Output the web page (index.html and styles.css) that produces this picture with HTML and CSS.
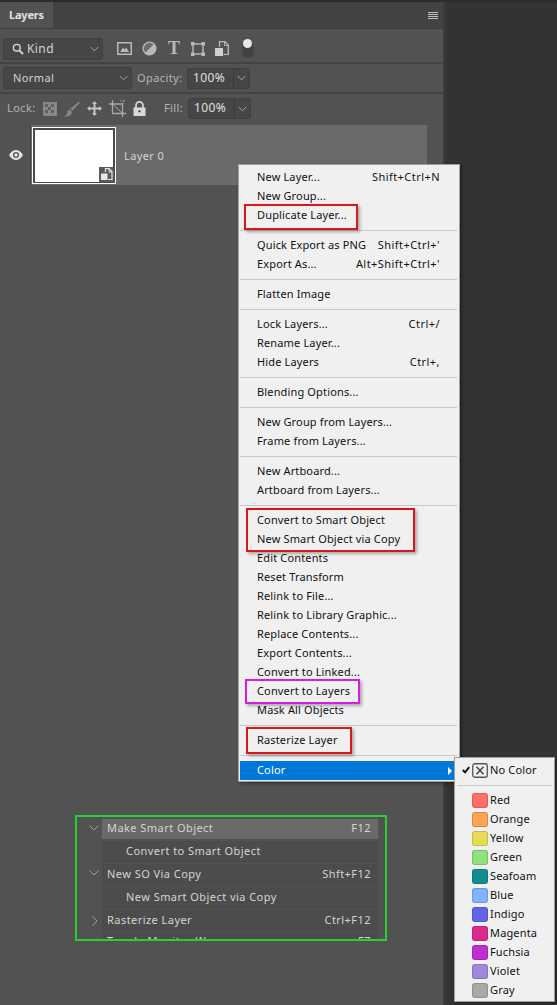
FILE: index.html
```html
<!DOCTYPE html>
<html lang="en">
<head>
    <meta charset="UTF-8">
    <meta name="viewport" content="width=device-width, initial-scale=1.0">
    <title>Layers panel menu</title>
    <link rel="stylesheet" href="styles.css">
</head>
<body>

    <div class="panel">
        <!-- Tab bar -->
        <div class="tabbar">
            <div class="tab">Layers</div>
            <div class="burger"><i></i><i></i><i></i><i></i></div>
        </div>

        <!-- Filter row -->
        <div class="row row-filter">
            <div class="select select-kind">
                <svg class="search" width="12" height="12" viewBox="0 0 12 12"><circle cx="4.8" cy="4.8" r="3.4" fill="none" stroke="#d8d8d8" stroke-width="1.4"/><path d="M7.3 7.3 11 11" stroke="#d8d8d8" stroke-width="1.8"/></svg>
                <span>Kind</span>
                <svg class="chev" width="9" height="6" viewBox="0 0 9 6"><path d="M.7.9 4.5 4.8 8.3.9" fill="none" stroke="#a8a8a8"/></svg>
            </div>
            <div class="filters">
                <svg width="15" height="13" viewBox="0 0 15 13"><rect x=".75" y=".75" width="13.5" height="11.5" fill="none" stroke="#b9b9b9" stroke-width="1.5"/><path d="M3 10 6 5.5 7.7 7.6 9.3 5.5 12 10Z" fill="#b9b9b9"/></svg>
                <svg width="15" height="15" viewBox="0 0 15 15"><circle cx="7.5" cy="7.5" r="7" fill="#b9b9b9"/><path d="M11.6 3.4A5.8 5.8 0 0 0 3.4 11.6Z" fill="#6d6d6d"/></svg>
                <span class="type-t">T</span>
                <svg width="14" height="14" viewBox="0 0 14 14"><rect x="2" y="2" width="10" height="10" fill="none" stroke="#b9b9b9" stroke-width="1.4"/><path d="M0 0h3.5v3.5H0zM10.500 0H14v3.500h-3.500zM0 10.500h3.500V14H0zM10.500 10.500H14V14h-3.500z" fill="#b9b9b9"/></svg>
                <svg width="14" height="15" viewBox="0 0 14 15"><path d="M4.500 6V.7h5.500l3.300 3.300v9.300H8.500" fill="none" stroke="#b9b9b9" stroke-width="1.300"/><path d="M9.500.7v3.800h3.800" fill="none" stroke="#b9b9b9"/><rect x="0" y="7" width="8" height="8" fill="#d0d0d0"/></svg>
                <div class="toggle"><b></b></div>
            </div>
        </div>

        <!-- Blend mode row -->
        <div class="row row-blend">
            <div class="select select-blend">
                <span>Normal</span>
                <svg class="chev" width="9" height="6" viewBox="0 0 9 6"><path d="M.7.9 4.5 4.800 8.300.9" fill="none" stroke="#a8a8a8"/></svg>
            </div>
            <span class="label label-opacity">Opacity:</span>
            <div class="percent">
                <span>100%</span>
                <em><svg width="9" height="6" viewBox="0 0 9 6"><path d="M.7.9 4.500 4.800 8.300.9" fill="none" stroke="#a8a8a8"/></svg></em>
            </div>
        </div>

        <!-- Lock row -->
        <div class="row row-lock">
            <span class="label label-lock">Lock:</span>
            <div class="locks">
                <svg width="14" height="14" viewBox="0 0 14 14"><rect x=".5" y=".5" width="13" height="13" fill="#8a8a8a" stroke="#858585"/><path d="M2 2h3v3H2zM8 2h3v3H8zM5 5h3v3H5zM2 8h3v3H2zM8 8h3v3H8z" fill="#5f5f5f"/></svg>
                <svg width="16" height="16" viewBox="0 0 16 16"><path d="M15 .5 16 1.500 8.500 9.800 6.300 7.800Z" fill="#858585"/><path d="M5.500 8.500C3 9 3.500 12 2.500 13.500 2 14.300 1 14.800.3 15.200 3.500 16.200 7.500 15 8 11Z" fill="#858585"/></svg>
                <svg width="15" height="15" viewBox="0 0 15 15"><path d="M7.500 0 10 3H8.500V6.500H12V5l3 2.500L12 10V8.500H8.500V12H10l-2.500 3L5 12h1.500V8.500H3V10L0 7.500 3 5v1.500h3.500V3H5Z" fill="#c4c4c4"/></svg>
                <svg width="17" height="17" viewBox="0 0 17 17"><path d="M3.500 0v13.500H17M0 4h13.500v13" fill="none" stroke="#a8a8a8" stroke-width="1.300"/><path d="M11 1l5 0M14.500 0v4" stroke="#a8a8a8" stroke-dasharray="2 1" fill="none" opacity=".7"/><path d="M3.500 4 13.500 13.500" stroke="#a8a8a8" stroke-width="1"/></svg>
                <svg width="13" height="15" viewBox="0 0 13 15"><path d="M3 7V4.300a3.500 3.500 0 0 1 7 0V7" fill="none" stroke="#d8d8d8" stroke-width="1.700"/><path d="M.5 6.500h12V15H.5ZM6.500 9a1.300 1.300 0 0 0 0 2.600 1.300 1.300 0 0 0 0-2.600Z" fill="#d8d8d8" fill-rule="evenodd"/></svg>
            </div>
            <span class="label label-fill">Fill:</span>
            <div class="percent">
                <span>100%</span>
                <em><svg width="9" height="6" viewBox="0 0 9 6"><path d="M.7.9 4.500 4.800 8.300.9" fill="none" stroke="#a8a8a8"/></svg></em>
            </div>
        </div>

        <!-- Layer row -->
        <div class="layer">
            <div class="eye">
                <svg width="14" height="10" viewBox="0 0 14 10"><path d="M0 5C2 1.500 4.500 0 7 0s5 1.500 7 5c-2 3.500-4.500 5-7 5S2 8.500 0 5Z" fill="#e4e4e4"/><circle cx="7" cy="5" r="3" fill="#535353"/><circle cx="7" cy="5" r="1.700" fill="#e4e4e4"/></svg>
            </div>
            <div class="thumb">
                <div class="badge">
                    <svg width="12" height="12" viewBox="0 0 12 12"><path d="M4.500 4V.5H8L11 3.500V11.500H7" fill="none" stroke="#e8e8e8" stroke-width="1.200"/><path d="M8 .5v3.500h3" fill="none" stroke="#e8e8e8"/><rect x="0" y="5.500" width="6.500" height="6.500" fill="#e8e8e8"/></svg>
                </div>
            </div>
            <span class="layer-name">Layer 0</span>
        </div>

        <!-- Keyboard shortcut list -->
        <div class="shortcuts">
            <div class="cmd cmd-active">
                <svg class="twist" width="10" height="6" viewBox="0 0 10 6"><path d="M.5.5 5 5 9.500.5" fill="none" stroke="#a0a0a0"/></svg>
                <div class="cmd-body"><span>Make Smart Object</span><span>F12</span></div>
            </div>
            <div class="cmd cmd-child">
                <div class="cmd-body"><span>Convert to Smart Object</span></div>
            </div>
            <div class="cmd">
                <svg class="twist" width="10" height="6" viewBox="0 0 10 6"><path d="M.5.5 5 5 9.500.5" fill="none" stroke="#a0a0a0"/></svg>
                <div class="cmd-body"><span>New SO Via Copy</span><span>Shft+F12</span></div>
            </div>
            <div class="cmd cmd-child">
                <div class="cmd-body"><span>New Smart Object via Copy</span></div>
            </div>
            <div class="cmd">
                <svg class="twist twist-closed" width="6" height="10" viewBox="0 0 6 10"><path d="M.5.5 5 5 .5 9.500" fill="none" stroke="#a0a0a0"/></svg>
                <div class="cmd-body"><span>Rasterize Layer</span><span>Ctrl+F12</span></div>
            </div>
            <div class="cmd cmd-last">
                <div class="cmd-body"><span>Toggle Monitor W</span><span>F7</span></div>
            </div>
        </div>
    </div>

    <div class="side"></div>

    <!-- Context menu -->
    <div class="menu">
        <div class="item"><span>New Layer...</span><span>Shift+Ctrl+N</span></div>
        <div class="item"><span>New Group...</span></div>
        <div class="item"><span>Duplicate Layer...</span></div>
        <div class="sep"></div>
        <div class="item"><span>Quick Export as PNG</span><span>Shift+Ctrl+'</span></div>
        <div class="item"><span>Export As...</span><span>Alt+Shift+Ctrl+'</span></div>
        <div class="sep"></div>
        <div class="item"><span>Flatten Image</span></div>
        <div class="sep"></div>
        <div class="item"><span>Lock Layers...</span><span>Ctrl+/</span></div>
        <div class="item"><span>Rename Layer...</span></div>
        <div class="item"><span>Hide Layers</span><span>Ctrl+,</span></div>
        <div class="sep"></div>
        <div class="item"><span>Blending Options...</span></div>
        <div class="sep"></div>
        <div class="item"><span>New Group from Layers...</span></div>
        <div class="item"><span>Frame from Layers...</span></div>
        <div class="sep"></div>
        <div class="item"><span>New Artboard...</span></div>
        <div class="item"><span>Artboard from Layers...</span></div>
        <div class="sep"></div>
        <div class="item"><span>Convert to Smart Object</span></div>
        <div class="item"><span>New Smart Object via Copy</span></div>
        <div class="item"><span>Edit Contents</span></div>
        <div class="item"><span>Reset Transform</span></div>
        <div class="item"><span>Relink to File...</span></div>
        <div class="item"><span>Relink to Library Graphic...</span></div>
        <div class="item"><span>Replace Contents...</span></div>
        <div class="item"><span>Export Contents...</span></div>
        <div class="item"><span>Convert to Linked...</span></div>
        <div class="item"><span>Convert to Layers</span></div>
        <div class="item"><span>Mask All Objects</span></div>
        <div class="sep"></div>
        <div class="item"><span>Rasterize Layer</span></div>
        <div class="sep"></div>
        <div class="item item-selected"><span>Color</span><i class="arrow"></i></div>

        <!-- Annotation boxes -->
        <div class="mark mark-duplicate"></div>
        <div class="mark mark-smart"></div>
        <div class="mark mark-layers"></div>
        <div class="mark mark-rasterize"></div>
    </div>

    <!-- Color submenu -->
    <div class="submenu">
        <div class="sub-item">
            <svg class="check" width="8" height="8" viewBox="0 0 10 9"><path d="M1 4.500 3.800 7.500 9 1" fill="none" stroke="#111" stroke-width="2.400"/></svg>
            <svg class="nocolor" width="16" height="15" viewBox="0 0 16 15"><rect x=".75" y=".75" width="14.500" height="13.500" rx="2" fill="none" stroke="#555" stroke-width="1.300"/><path d="M4.500 3.800 11.500 11.200M11.500 3.800 4.500 11.200" stroke="#444" stroke-width="1.500"/></svg>
            <span>No Color</span>
        </div>
        <div class="sep"></div>
        <div class="sub-item"><i class="swatch swatch-red"></i><span>Red</span></div>
        <div class="sub-item"><i class="swatch swatch-orange"></i><span>Orange</span></div>
        <div class="sub-item"><i class="swatch swatch-yellow"></i><span>Yellow</span></div>
        <div class="sub-item"><i class="swatch swatch-green"></i><span>Green</span></div>
        <div class="sub-item"><i class="swatch swatch-seafoam"></i><span>Seafoam</span></div>
        <div class="sub-item"><i class="swatch swatch-blue"></i><span>Blue</span></div>
        <div class="sub-item"><i class="swatch swatch-indigo"></i><span>Indigo</span></div>
        <div class="sub-item"><i class="swatch swatch-magenta"></i><span>Magenta</span></div>
        <div class="sub-item"><i class="swatch swatch-fuchsia"></i><span>Fuchsia</span></div>
        <div class="sub-item"><i class="swatch swatch-violet"></i><span>Violet</span></div>
        <div class="sub-item"><i class="swatch swatch-gray"></i><span>Gray</span></div>
    </div>

</body>
</html>
```

FILE: styles.css
```css
html, body {
    margin: 0;
    height: 1005px;
    overflow: hidden;
}
body {
    display: flex;
    padding-top: 2px;
    box-sizing: border-box;
    background-color: #2c2c2c;
    font-family: "Noto Sans", Arial, sans-serif;
    font-size: 11px;
    color: #d4d4d4;
}
.panel {
    width: 443px;
    flex: none;
    background-color: #525252;
}
.side {
    flex: 1;
    background: linear-gradient(to right, #3d3d3d, #333 4px);
}

/* Tab bar */
.tabbar {
    height: 26px;
    display: flex;
    justify-content: space-between;
    align-items: center;
    background-color: #424242;
    border-bottom: 1px solid #3c3c3c;
}
.tab {
    width: 53px;
    height: 26px;
    line-height: 26px;
    box-sizing: border-box;
    padding-left: 9px;
    background-color: #525252;
    font-weight: 700;
    font-size: 11px;
    letter-spacing: -0.2px;
    color: #e2e2e2;
}
.burger {
    width: 10px;
    margin-right: 5px;
    display: flex;
    flex-direction: column;
    gap: 1px;
}
.burger i {
    height: 1px;
    background-color: #c0c0c0;
}

/* Control rows */
.row {
    display: flex;
    align-items: center;
    border-bottom: 2px solid #424242;
    box-sizing: border-box;
}
.row-filter {
    height: 35px;
    padding: 6px 0 0 3px;
}
.row-blend {
    height: 30px;
    padding-left: 3px;
}
.row-lock {
    height: 31px;
    border-bottom: none;
    padding: 0 0 2px 7px;
}
.select {
    height: 22px;
    display: flex;
    align-items: center;
    box-sizing: border-box;
    background-color: #464646;
    border: 1px solid #3f3f3f;
    border-radius: 3px;
    position: relative;
    letter-spacing: 0.4px;
}
.select span, .label {
    padding-bottom: 2px;
}
.select .chev {
    margin-left: auto;
    margin-right: 3px;
}
.select-kind {
    width: 100px;
    padding-left: 8px;
    font-size: 12px;
}
.select-kind span {
    margin-left: 3px;
    padding-bottom: 0;
}
.select-blend {
    width: 129px;
    padding-left: 9px;
}
.filters {
    display: flex;
    align-items: center;
    margin-left: 14px;
    gap: 10px;
}
.type-t {
    width: 14px;
    text-align: center;
    font-family: "Liberation Serif", serif;
    font-weight: 700;
    font-size: 18px;
    line-height: 15px;
    color: #b9b9b9;
}
.toggle {
    width: 10px;
    height: 14px;
    margin: 3px 0 0 3px;
    border-radius: 5px;
    background-color: #424242;
    border: 1px solid #484848;
    position: relative;
}
.toggle b {
    position: absolute;
    left: 0;
    top: -4px;
    width: 9px;
    height: 9px;
    border-radius: 50%;
    background-color: #e8e8e8;
}
.label {
    color: #b4b4b4;
    letter-spacing: 0.4px;
}
.label-opacity {
    margin-left: 5px;
    width: 50px;
}
.label-lock {
    width: 36px;
}
.label-fill {
    margin-left: 18px;
    width: 24px;
}
.percent {
    width: 63px;
    height: 21px;
    display: flex;
    box-sizing: border-box;
    background-color: #464646;
    border: 1px solid #3f3f3f;
    border-radius: 3px;
    line-height: 18px;
    font-size: 12px;
    color: #e0e0e0;
    letter-spacing: 0.4px;
}
.percent span {
    flex: 1;
    padding-left: 5px;
}
.percent em {
    width: 15px;
    display: flex;
    align-items: center;
    justify-content: center;
    border-left: 1px solid #3a3a3a;
}
.locks {
    display: flex;
    align-items: center;
    gap: 7px;
}

/* Layer row */
.layer {
    height: 60px;
    width: 427px;
    display: flex;
    align-items: center;
    background: linear-gradient(to right, #525252 30px, #464646 30px, #464646 31px, #6a6a6a 31px);
}
.eye {
    width: 32px;
    padding-left: 9px;
    box-sizing: border-box;
    display: flex;
}
.thumb {
    width: 84px;
    height: 57px;
    box-sizing: border-box;
    background-color: #fff;
    border: 1px solid #fff;
    box-shadow: inset 0 2px 0 #4a4a4a, inset 2px 0 0 #4a4a4a, inset -2px 0 0 #4a4a4a, inset 0 -1px 0 #4a4a4a;
    position: relative;
}
.badge {
    position: absolute;
    right: 1px;
    bottom: 1px;
    width: 15px;
    height: 15px;
    background-color: #5a5a5a;
    display: flex;
    align-items: center;
    justify-content: center;
}
.layer-name {
    margin-left: 8px;
    letter-spacing: 0.4px;
}

/* Shortcut list */
.shortcuts {
    width: 312px;
    height: 126px;
    box-sizing: border-box;
    margin: 630px 0 0 75px;
    border: 2px solid #27d02c;
    padding-top: 2px;
    overflow: hidden;
}
.cmd {
    height: 23px;
    display: flex;
    position: relative;
    padding-left: 25px;
    padding-right: 7px;
    letter-spacing: 0.45px;
}
.cmd-body {
    flex: 1;
    height: 22px;
    box-sizing: border-box;
    display: flex;
    justify-content: space-between;
    align-items: center;
    padding: 0 7px 3px 5px;
    background-color: #4c4c4c;
}
.cmd-active {
    height: 22px;
}
.cmd-active .cmd-body {
    height: 20px;
    padding-bottom: 4px;
    background-color: #6a6a6a;
}
.cmd-last .cmd-body {
    padding-bottom: 7px;
}
.cmd-child .cmd-body {
    padding-left: 24px;
}
.twist {
    position: absolute;
    left: 12px;
    top: 6px;
}
.twist-closed {
    left: 15px;
    top: 6px;
}

/* Context menu */
.menu, .submenu {
    position: absolute;
    box-sizing: border-box;
    background-color: #f0f0f0;
    border: 1px solid #a0a0a0;
    box-shadow: 2px 2px 3px rgba(0, 0, 0, 0.35);
    color: #111;
    letter-spacing: 0.15px;
}
.menu {
    left: 238px;
    top: 164px;
    width: 222px;
    height: 618px;
    padding: 3px 2px 2px 1px;
}
.item {
    height: 19px;
    box-sizing: border-box;
    display: flex;
    justify-content: space-between;
    align-items: center;
    padding: 0 17px 2px 17px;
    white-space: nowrap;
}
.item span + span {
    letter-spacing: 0.45px;
}
.item-selected {
    background-color: #0078d7;
    color: #fff;
    position: relative;
}
.arrow {
    position: absolute;
    right: 5px;
    top: 6px;
    border-left: 4px solid #fff;
    border-top: 4px solid transparent;
    border-bottom: 4px solid transparent;
}
.sep {
    height: 1px;
    margin: 5px 0;
    background-color: #c8c8c8;
}

/* Annotation boxes */
.mark {
    position: absolute;
    box-sizing: border-box;
    border: 2px solid #d9161c;
    box-shadow: 2px 2px 3px rgba(0, 0, 0, 0.3);
}
.mark-duplicate {
    left: 5px;
    top: 39px;
    width: 114px;
    height: 26px;
}
.mark-smart {
    left: 7px;
    top: 343px;
    width: 169px;
    height: 44px;
}
.mark-layers {
    left: 6px;
    top: 514px;
    width: 115px;
    height: 25px;
    border-color: #d41fe0;
}
.mark-rasterize {
    left: 7px;
    top: 562px;
    width: 106px;
    height: 27px;
}

/* Color submenu */
.submenu {
    left: 454px;
    top: 757px;
    width: 101px;
    height: 245px;
    padding: 3px 2px 0 2px;
    z-index: 2;
}
.sub-item {
    height: 19px;
    box-sizing: border-box;
    display: flex;
    align-items: center;
    position: relative;
    padding: 0 0 2px 33px;
    white-space: nowrap;
}
.check {
    position: absolute;
    left: 5px;
    top: 5px;
}
.nocolor {
    position: absolute;
    left: 15px;
    top: 2px;
}
.swatch {
    position: absolute;
    left: 15px;
    top: 2px;
    width: 16px;
    height: 15px;
    box-sizing: border-box;
    border-radius: 3px;
    border: 1px solid rgba(0, 0, 0, 0.15);
}
.swatch-red { background-color: #ff6f66; }
.swatch-orange { background-color: #ffa352; }
.swatch-yellow { background-color: #e8dc55; }
.swatch-green { background-color: #90e07c; }
.swatch-seafoam { background-color: #148c90; }
.swatch-blue { background-color: #80b4ff; }
.swatch-indigo { background-color: #6464e8; }
.swatch-magenta { background-color: #d82a8c; }
.swatch-fuchsia { background-color: #c030d0; }
.swatch-violet { background-color: #a088dc; }
.swatch-gray { background-color: #a8a8a8; }
```
